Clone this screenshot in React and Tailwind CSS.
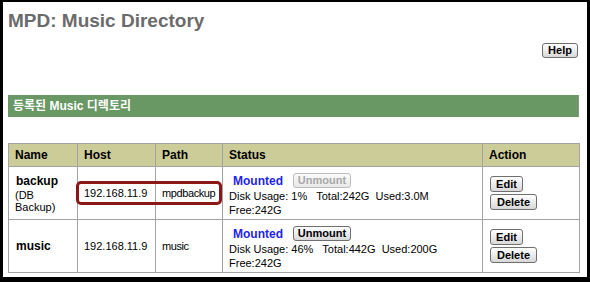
import React from "react";

const rows = [
  {
    name: "backup",
    note: ["(DB", "Backup)"],
    host: "192.168.11.9",
    path: "mpdbackup",
    canUnmount: false,
    usage: "Disk Usage: 1%   Total:242G  Used:3.0M",
    free: "Free:242G",
  },
  {
    name: "music",
    note: null,
    host: "192.168.11.9",
    path: "music",
    canUnmount: true,
    usage: "Disk Usage: 46%   Total:442G  Used:200G",
    free: "Free:242G",
  },
];

function Btn({ children, disabled, className = "" }) {
  return (
    <button
      className={
        "flex items-center justify-center rounded-[3px] border text-[11px] font-bold leading-none " +
        (disabled
          ? "border-[#bdbdbd] bg-gradient-to-b from-[#fafafa] to-[#e8e8e8] text-[#a8a8a8] "
          : "border-[#6f6f6f] bg-gradient-to-b from-[#ffffff] to-[#d8d8d8] text-black ") +
        className
      }
    >
      {children}
    </button>
  );
}

export default function App() {
  return (
    <div className="w-[590px] h-[282px] bg-black pl-[3px] pt-[2px] pr-[3px] pb-[5px] font-['Liberation_Sans',Arial,sans-serif]">
      <div className="w-full h-full bg-white pl-[5px] pr-[8px] flex flex-col">
        {/* Title */}
        <h1 className="mt-[8px] h-[22px] leading-[22px] text-[19px] font-bold text-[#6b6b6b]">
          MPD: Music Directory
        </h1>

        {/* Help */}
        <div className="mt-[11px] flex justify-end pr-[1px]">
          <Btn className="w-[36px] h-[15px]">Help</Btn>
        </div>

        {/* Section bar */}
        <div className="mt-[37px] h-[22px] bg-[#699865] border-r border-[#8a9a88] flex items-center pl-[5px]">
          <span className="text-[12px] font-bold text-white font-['Liberation_Sans','Noto_Sans_CJK_KR',sans-serif]">
            등록된 Music 디렉토리
          </span>
        </div>

        {/* Table */}
        <div className="relative mt-[26px]">
          <table className="table-fixed border-collapse w-[571px] text-[11px] text-black">
            <colgroup>
              <col className="w-[69px]" />
              <col className="w-[78px]" />
              <col className="w-[67px]" />
              <col className="w-[260px]" />
              <col className="w-[97px]" />
            </colgroup>
            <thead>
              <tr className="h-[23px] bg-[#cccc99]">
                {["Name", "Host", "Path", "Status", "Action"].map((h) => (
                  <th
                    key={h}
                    className="border border-[#a3a3a3] px-[6px] text-left text-[12px] font-bold"
                  >
                    {h}
                  </th>
                ))}
              </tr>
            </thead>
            <tbody>
              {rows.map((r) => (
                <tr key={r.name} className="h-[53px]">
                  <td className="border border-[#a3a3a3] px-[6px] align-middle">
                    <div className="text-[12px] font-bold leading-[15px] pl-[1px]">{r.name}</div>
                    {r.note &&
                      r.note.map((n) => (
                        <div key={n} className="leading-[12px]">
                          {n}
                        </div>
                      ))}
                  </td>
                  <td className="border border-[#a3a3a3] px-[6px] align-middle">{r.host}</td>
                  <td className="border border-[#a3a3a3] px-[6px] align-middle tracking-[-0.4px]">{r.path}</td>
                  <td className="border border-[#a3a3a3] px-[6px] align-top pt-[6px]">
                    <div className="flex items-center h-[15px] pl-[4px] gap-[10px]">
                      <span className="text-[12px] font-bold text-[#1f1ff0]">Mounted</span>
                      <Btn disabled={!r.canUnmount} className="w-[58px] h-[15px]">
                        Unmount
                      </Btn>
                    </div>
                    <div className="whitespace-pre leading-[14px] mt-[1px]">{r.usage}</div>
                    <div className="leading-[14px]">{r.free}</div>
                  </td>
                  <td className="border border-[#a3a3a3] px-[6px] align-middle">
                    <div className="flex flex-col gap-[2px] pl-[1px]">
                      <Btn className="w-[33px] h-[16px]">Edit</Btn>
                      <Btn className="w-[47px] h-[16px]">Delete</Btn>
                    </div>
                  </td>
                </tr>
              ))}
            </tbody>
          </table>

          {/* highlight around host/path */}
          <div className="absolute left-[68px] top-[38px] w-[146px] h-[24px] border-[3px] border-[#8c1717] rounded-[5px] pointer-events-none" />
        </div>
      </div>
    </div>
  );
}
